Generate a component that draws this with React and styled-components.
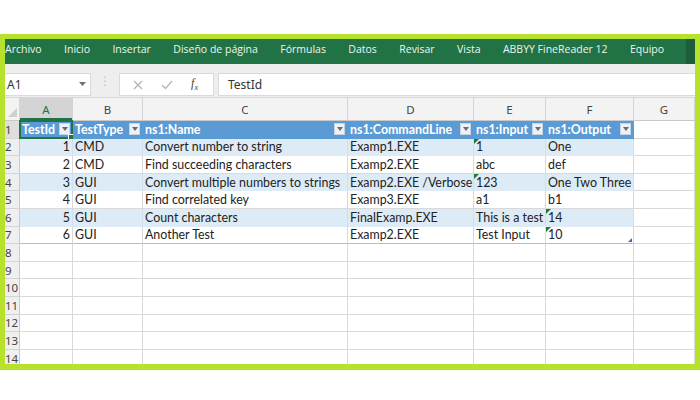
import React from "react";
import styled, { createGlobalStyle, css } from "styled-components";

const GlobalStyle = createGlobalStyle`
  html, body { margin: 0; padding: 0; background: #ffffff; }
  #root { width: 700px; height: 400px; overflow: hidden; }
`;

const Frame = styled.div`
  margin-top: 34px;
  width: 700px;
  height: 336px;
  box-sizing: border-box;
  border: 5px solid #b6e22c;
  border-bottom-width: 6px;
  display: flex;
  flex-direction: column;
  overflow: hidden;
  background: #ffffff;
`;

const Ribbon = styled.div`
  height: 25px;
  flex: none;
  box-sizing: border-box;
  padding-bottom: 5px;
  background: #217346;
  display: flex;
  align-items: center;
  gap: 22.4px;
  font-family: "Open Sans", "Noto Sans", sans-serif;
  font-size: 10.5px;
  color: #eef5f0;
`;

const Tab = styled.span`
  white-space: nowrap;
`;

const RibbonEnd = styled.div`
  margin-left: auto;
  align-self: flex-start;
  width: 17px;
  height: 25px;
  background: #1b5e39;
`;

const FormulaBar = styled.div`
  height: 34px;
  flex: none;
  background: #eeeeee;
  display: flex;
  align-items: flex-end;
  padding-bottom: 1px;
  box-sizing: border-box;
  border-bottom: 1px solid #d6d6d6;
`;

const Box = styled.div`
  height: 23px;
  box-sizing: border-box;
  background: #ffffff;
  border: 1px solid #dadada;
  display: flex;
  align-items: center;
  font-family: "Noto Sans", "Open Sans", sans-serif;
  font-size: 12px;
  color: #333;
`;

const NameBox = styled(Box)`
  width: 86px;
  border-left: none;
  padding-left: 2px;
  justify-content: space-between;
  padding-right: 4px;
`;

const Dots = styled.div`
  width: 28px;
  display: flex;
  justify-content: center;
  align-self: center;
  color: #c2c2c2;
  font-size: 12px;
  font-family: "DejaVu Sans", sans-serif;
  margin-top: 2px;
`;

const FxBox = styled(Box)`
  width: 95px;
  justify-content: space-around;
  padding: 0 6px 0 4px;
`;

const Fx = styled.span`
  font-family: "Liberation Serif", serif;
  font-style: italic;
  font-size: 12px;
  color: #444;
  sub { font-size: 8px; }
`;

const Input = styled(Box)`
  flex: 1;
  margin-left: 4px;
  border-right: none;
  padding-left: 9px;
`;

const Sheet = styled.div`
  flex: 1;
  overflow: hidden;
  font-family: "Lato", "Liberation Sans", sans-serif;
  font-size: 12.4px;
  color: #222;
`;

const COLS = "15px 53px 70px 205px 126px 72px 88px 61px";

const HeadRow = styled.div`
  display: grid;
  grid-template-columns: ${COLS};
  height: 23px;
  background: #f3f3f3;
  border-bottom: 1px solid #c9c9c9;
  box-sizing: border-box;
`;

const ColHead = styled.div`
  display: flex;
  align-items: center;
  justify-content: center;
  border-right: 1px solid #d4d4d4;
  font-family: "Noto Sans", "Open Sans", sans-serif;
  font-size: 11.5px;
  color: #444;
  ${(p) =>
    p.$active &&
    css`
      background: #d4d4d4;
      color: #217346;
      box-shadow: inset 0 -2px 0 #217346;
    `}
`;

const Corner = styled.div`
  border-right: 1px solid #d4d4d4;
  position: relative;
  &::after {
    content: "";
    position: absolute;
    right: 2px;
    bottom: 3px;
    border-style: solid;
    border-width: 0 0 9px 9px;
    border-color: transparent transparent #cfcfcf transparent;
  }
`;

const Row = styled.div`
  display: grid;
  grid-template-columns: ${COLS};
  height: 17.6px;
`;

const RowHead = styled.div`
  background: ${(p) => (p.$active ? "#dedede" : "#efefef")};
  border-bottom: 1px solid #d4d4d4;
  border-right: 1px solid #c9c9c9;
  font-family: "Noto Sans", "Open Sans", sans-serif;
  font-size: 11.5px;
  color: #444;
  display: flex;
  align-items: center;
  overflow: hidden;
  white-space: nowrap;
`;

const Cell = styled.div`
  position: relative;
  box-sizing: border-box;
  display: flex;
  align-items: center;
  justify-content: ${(p) => (p.$right ? "flex-end" : "flex-start")};
  padding: 0 2px 0 2px;
  white-space: nowrap;
  border-right: 1px solid ${(p) => (p.$tone === "head" ? "#5b9bd5" : p.$tone === "band" ? "#cfdff0" : "#d9d9d9")};
  border-bottom: 1px solid ${(p) => (p.$tone === "head" ? "#5b9bd5" : p.$tone === "band" ? "#ddebf7" : "#d9d9d9")};
  background: ${(p) => (p.$tone === "head" ? "#5b9bd5" : p.$tone === "band" ? "#ddebf7" : "#ffffff")};
  ${(p) =>
    p.$tone === "head" &&
    css`
      color: #ffffff;
      font-weight: 700;
      justify-content: space-between;
    `}
  ${(p) =>
    p.$last &&
    css`
      border-bottom-color: #9bc2e6;
    `}
  ${(p) =>
    p.$flag &&
    css`
      &::before {
        content: "";
        position: absolute;
        left: 0;
        top: 0;
        border-style: solid;
        border-width: 5px 5px 0 0;
        border-color: #1e7d3c transparent transparent transparent;
      }
    `}
  ${(p) =>
    p.$resize &&
    css`
      &::after {
        content: "";
        position: absolute;
        right: 1px;
        bottom: 1px;
        border-style: solid;
        border-width: 0 0 4px 4px;
        border-color: transparent transparent #3e6aa8 transparent;
      }
    `}
`;

const Filter = styled.span`
  width: 11px;
  height: 12px;
  box-sizing: border-box;
  background: #eef2f6;
  border: 1px solid #c5d3e2;
  display: flex;
  align-items: center;
  justify-content: center;
  flex: none;
  &::after {
    content: "";
    border-style: solid;
    border-width: 4px 3px 0 3px;
    border-color: #6a6a6a transparent transparent transparent;
  }
`;

const Selection = styled.div`
  position: absolute;
  left: -1px;
  top: -1px;
  right: -1px;
  bottom: -1px;
  border: 2px solid #217346;
  pointer-events: none;
  &::after {
    content: "";
    position: absolute;
    right: -4px;
    bottom: -4px;
    width: 5px;
    height: 5px;
    background: #217346;
    border: 1px solid #ffffff;
  }
`;

const tabs = [
  "Archivo",
  "Inicio",
  "Insertar",
  "Diseño de página",
  "Fórmulas",
  "Datos",
  "Revisar",
  "Vista",
  "ABBYY FineReader 12",
  "Equipo",
];

const headers = ["TestId", "TestType", "ns1:Name", "ns1:CommandLine", "ns1:Input", "ns1:Output"];

const data = [
  ["1", "CMD", "Convert number to string", "Examp1.EXE", "1", "One"],
  ["2", "CMD", "Find succeeding characters", "Examp2.EXE", "abc", "def"],
  ["3", "GUI", "Convert multiple numbers to strings", "Examp2.EXE /Verbose", "123", "One Two Three"],
  ["4", "GUI", "Find correlated key", "Examp3.EXE", "a1", "b1"],
  ["5", "GUI", "Count characters", "FinalExamp.EXE", "This is a test", "14"],
  ["6", "GUI", "Another Test", "Examp2.EXE", "Test Input", "10"],
];

const flags = { "0-4": true, "2-4": true, "4-5": true, "5-5": true };

const Cross = () => (
  <svg width="10" height="10" viewBox="0 0 10 10">
    <path d="M1 1 L9 9 M9 1 L1 9" stroke="#b4b4b4" strokeWidth="1.2" fill="none" />
  </svg>
);

const Check = () => (
  <svg width="12" height="10" viewBox="0 0 12 10">
    <path d="M1 5 L4.5 8.5 L11 1" stroke="#b4b4b4" strokeWidth="1.2" fill="none" />
  </svg>
);

const Caret = () => (
  <svg width="7" height="5" viewBox="0 0 7 5">
    <path d="M0 0 L7 0 L3.5 4 Z" fill="#707070" />
  </svg>
);

export default function App() {
  return (
    <>
      <GlobalStyle />
      <Frame>
        <Ribbon>
          {tabs.map((t) => (
            <Tab key={t}>{t}</Tab>
          ))}
          <RibbonEnd />
        </Ribbon>
        <FormulaBar>
          <NameBox>
            <span>A1</span>
            <Caret />
          </NameBox>
          <Dots>⋮</Dots>
          <FxBox>
            <Cross />
            <Check />
            <Fx>
              f<sub>x</sub>
            </Fx>
          </FxBox>
          <Input>TestId</Input>
        </FormulaBar>
        <Sheet>
          <HeadRow>
            <Corner />
            {["A", "B", "C", "D", "E", "F", "G"].map((c) => (
              <ColHead key={c} $active={c === "A"}>
                {c}
              </ColHead>
            ))}
          </HeadRow>
          <Row>
            <RowHead $active>1</RowHead>
            {headers.map((h, i) => (
              <Cell key={h} $tone="head">
                <span>{h}</span>
                <Filter />
                {i === 0 && <Selection />}
              </Cell>
            ))}
            <Cell />
          </Row>
          {data.map((r, ri) => (
            <Row key={ri}>
              <RowHead>{ri + 2}</RowHead>
              {r.map((v, ci) => (
                <Cell
                  key={ci}
                  $tone={ri % 2 === 0 ? "band" : "plain"}
                  $right={ci === 0}
                  $last={ri === data.length - 1}
                  $flag={flags[`${ri}-${ci}`]}
                  $resize={ri === data.length - 1 && ci === 5}
                >
                  {v}
                </Cell>
              ))}
              <Cell />
            </Row>
          ))}
          {Array.from({ length: 7 }, (_, i) => (
            <Row key={`e${i}`}>
              <RowHead>{i + 8}</RowHead>
              {Array.from({ length: 7 }, (_, j) => (
                <Cell key={j} />
              ))}
            </Row>
          ))}
        </Sheet>
      </Frame>
    </>
  );
}
